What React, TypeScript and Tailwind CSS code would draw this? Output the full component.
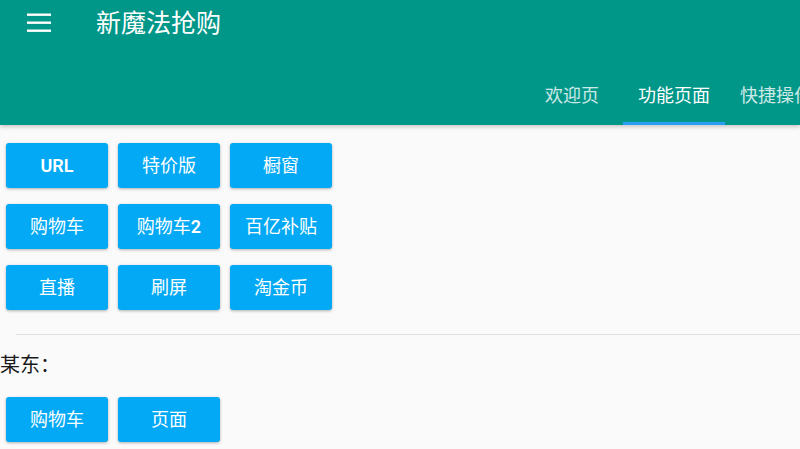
const font = { fontFamily: 'Roboto, "Noto Sans CJK SC", "Noto Sans", sans-serif' };

const rows = [
  ["URL", "特价版", "橱窗"],
  ["购物车", "购物车2", "百亿补贴"],
  ["直播", "刷屏", "淘金币"],
];

// latin runs render in Roboto medium, CJK stays regular like the reference
const Label = ({ text }: { text: string }) => (
  <>
    {text.split(/([A-Za-z0-9]+)/).map((part, i) =>
      /^[A-Za-z0-9]+$/.test(part) ? (
        <span key={i} className="font-semibold">
          {part}
        </span>
      ) : (
        <span key={i}>{part}</span>
      )
    )}
  </>
);

const ActionButton = ({ label }: { label: string }) => (
  <button className="w-[102px] h-[45px] rounded-[3px] bg-[#03a9f4] text-white text-[18px] font-normal shadow-[0_1px_3px_rgba(0,0,0,0.3)]">
    <Label text={label} />
  </button>
);

export default function App() {
  return (
    <div className="w-[800px] h-[449px] overflow-hidden bg-[#fafafa]" style={font}>
      <header className="bg-[#009688] text-white shadow-[0_2px_4px_rgba(0,0,0,0.2)]">
        <div className="h-[46px] flex items-center">
          <div className="w-[96px] pl-[27px] flex">
            <svg width="24" height="24" viewBox="0 0 24 24" fill="white">
              <rect x="0" y="2.5" width="24" height="2.4" />
              <rect x="0" y="10.5" width="24" height="2.4" />
              <rect x="0" y="18.5" width="24" height="2.4" />
            </svg>
          </div>
          <h1 className="text-[25px] leading-none">新魔法抢购</h1>
        </div>
        <nav className="h-[79px] flex justify-end items-end">
          <div className="flex translate-x-[27px]">
            {["欢迎页", "功能页面", "快捷操作"].map((t, i) => (
              <div
                key={t}
                className={`w-[102px] h-[56px] flex items-center justify-center text-[18px] border-b-[3px] ${
                  i === 1 ? "border-[#2a9df4] text-white" : "border-transparent text-white/80"
                }`}
              >
                {t}
              </div>
            ))}
          </div>
        </nav>
      </header>

      <main className="pt-[18px]">
        <div className="flex flex-col gap-[16px] pl-[6px]">
          {rows.map((r, i) => (
            <div key={i} className="flex gap-[10px]">
              {r.map((l) => (
                <ActionButton key={l} label={l} />
              ))}
            </div>
          ))}
        </div>
        <div className="ml-[16px] mt-[24px] border-t border-[#e0e0e0]" />
        <p className="mt-[18px] text-[20px] leading-[24px] text-[#1a1a1a]">某东：</p>
        <div className="flex gap-[10px] pl-[6px] mt-[20px]">
          <ActionButton label="购物车" />
          <ActionButton label="页面" />
        </div>
      </main>
    </div>
  );
}
